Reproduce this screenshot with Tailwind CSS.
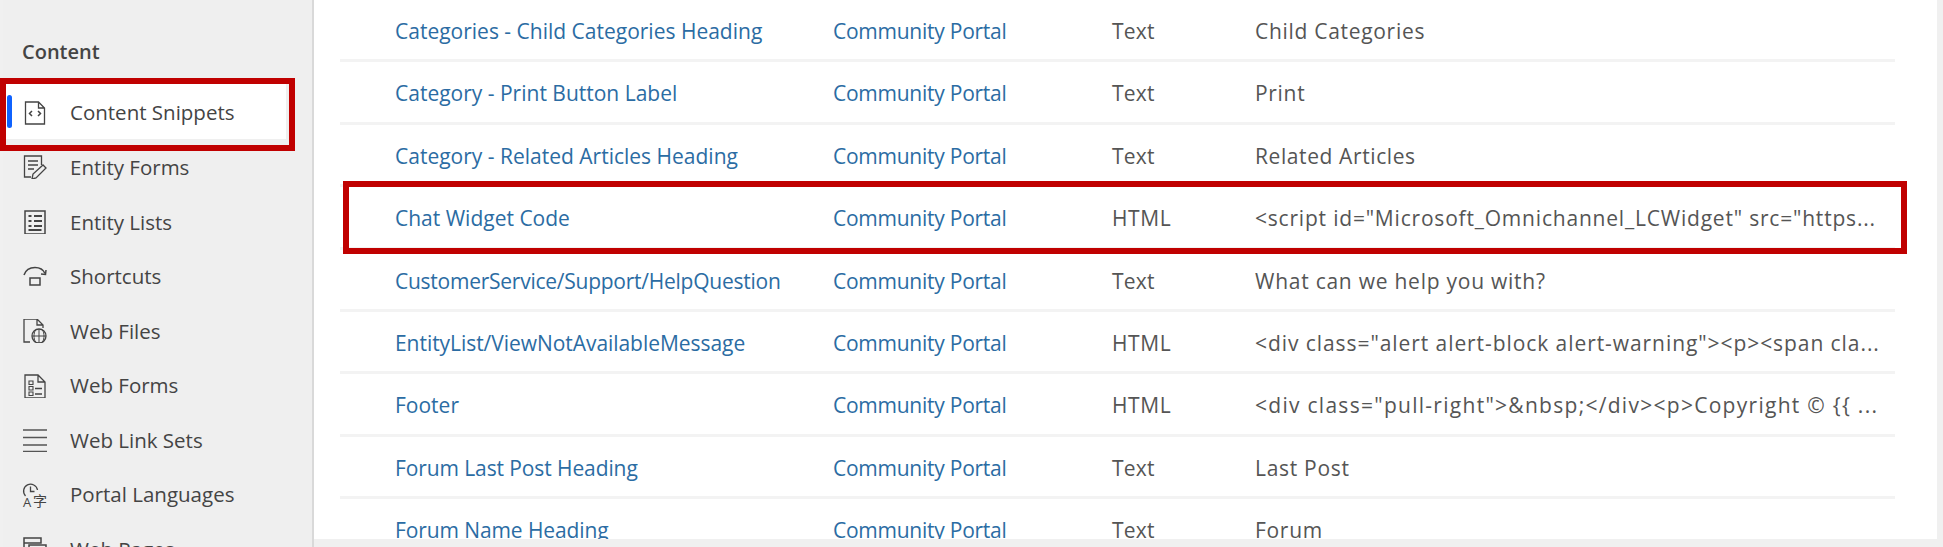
<!DOCTYPE html>
<html lang="en">
<head>
  <meta charset="UTF-8" />
  <title>Content Snippets</title>
  <script src="https://cdn.jsdelivr.net/npm/@tailwindcss/browser@4"></script>
</head>
<body class="bg-white font-['Open_Sans',sans-serif]">
<div class="relative flex h-[547px] w-[1943px] overflow-hidden bg-[#f0f0f0]">

  <!-- sidebar -->
  <aside class="ml-[3px] h-full w-[311px] shrink-0 overflow-hidden border-r-2 border-[#d9d9d9] bg-[#efefef] text-[20.5px] text-[#444]">
    <h2 class="h-[84px] pl-[19px] pt-[38px] text-[20px] leading-[28px] font-semibold text-[#444]">Content</h2>
    <ul class="w-[283px]">
      <li class="relative flex h-[55px] items-center gap-[23px] bg-white pt-[2px] pl-[20px]">
        <span class="absolute top-[11px] left-[4px] h-[33px] w-[5px] rounded-full bg-[#0f62fe]"></span>
        <svg class="h-6 w-6 shrink-0" viewBox="0 0 24 24" fill="none" stroke="#444" stroke-width="1.3"><path d="M2.5 1h13l6 6v16h-19zM15.5 1v6h6"/><path d="M9 10l-2.5 2.5L9 15M15 10l2.5 2.5L15 15" stroke-width="1.5"/></svg>
        <span>Content Snippets</span>
      </li>
      <li class="flex h-[54.6px] items-center gap-[23px] pt-[2px] pl-[20px]">
        <svg class="h-6 w-6 shrink-0" viewBox="0 0 24 24" fill="none" stroke="#444" stroke-width="1.3"><path d="M8 22H1.500V1h17v9"/><path d="M5 6h10M5 10h10M5 14h6"/><path d="M9 24l1-5 10-9 3 3-10 10z" fill="#efefef"/></svg>
        <span>Entity Forms</span>
      </li>
      <li class="flex h-[54.6px] items-center gap-[23px] pt-[2px] pl-[20px]">
        <svg class="h-6 w-6 shrink-0" viewBox="0 0 24 24" fill="none" stroke="#444" stroke-width="1.500"><path d="M2 1h20v23H2z"/><path d="M5.500 6h3M11 6h8M5.500 11h3M11 11h8M5.500 16h3M11 16h8M5.500 20h13" stroke-width="1.800"/></svg>
        <span>Entity Lists</span>
      </li>
      <li class="flex h-[54.6px] items-center gap-[23px] pt-[2px] pl-[20px]">
        <svg class="h-6 w-6 shrink-0" viewBox="0 0 24 24" fill="none" stroke="#444" stroke-width="1.500"><path d="M1 11C3 5 8 3.500 12 3.500c4 0 8 1.500 10 6"/><path d="M18 10l4.500.5.500-4.500"/><path d="M7 14h10v7H7z"/></svg>
        <span>Shortcuts</span>
      </li>
      <li class="flex h-[54.6px] items-center gap-[23px] pt-[2px] pl-[20px]">
        <svg class="h-6 w-6 shrink-0" viewBox="0 0 24 24" fill="none" stroke="#444" stroke-width="1.300"><path d="M7 23H1V0h13l6 6v3M14 0v6h6"/><circle cx="16" cy="17" r="7"/><path d="M9 17h14M16 10v14M12.500 11c-2 3.500-2 8.500 0 12M19.500 11c2 3.500 2 8.500 0 12" stroke-width="1"/></svg>
        <span>Web Files</span>
      </li>
      <li class="flex h-[54.6px] items-center gap-[23px] pt-[2px] pl-[20px]">
        <svg class="h-6 w-6 shrink-0" viewBox="0 0 24 24" fill="none" stroke="#444" stroke-width="1.300"><path d="M2 1h13l7 7v16H2zM15 1v7h7"/><path d="M6 7h4v3.500H6zM6 12.500h4V16H6zM6 18h4v3.500H6z" stroke-width="1.100"/><path d="M12 14.500h7M12 20h7"/></svg>
        <span>Web Forms</span>
      </li>
      <li class="flex h-[54.6px] items-center gap-[23px] pt-[2px] pl-[20px]">
        <svg class="h-6 w-6 shrink-0" viewBox="0 0 24 24" fill="none" stroke="#555" stroke-width="1.700"><path d="M0 2h24M0 9.500h24M0 17h24M0 23.500h24"/></svg>
        <span>Web Link Sets</span>
      </li>
      <li class="flex h-[54.6px] items-center gap-[23px] pt-[2px] pl-[20px]">
        <svg class="h-6 w-6 shrink-0 overflow-visible" viewBox="0 0 24 24" fill="none" stroke="#444" stroke-width="1.300"><path d="M2.500 13A7 7 0 1 1 14.500 7"/><path d="M7.500 3.500V8.500H11.500"/><text x="0" y="24" font-size="13" fill="#444" stroke="none" font-family="Open Sans, sans-serif">A</text><text x="10" y="22.500" font-size="14" fill="#444" stroke="none" font-family="Noto Sans CJK SC, sans-serif">字</text></svg>
        <span>Portal Languages</span>
      </li>
      <li class="flex h-[54.6px] items-center gap-[23px] pt-[2px] pl-[20px]">
        <svg class="h-6 w-6 shrink-0" viewBox="0 0 24 24" fill="none" stroke="#444" stroke-width="1.500"><path d="M1 1h17v5H1zM1 6v13h4M6 8h17v14H6zM6 12h17"/></svg>
        <span>Web Pages</span>
      </li>
    </ul>
  </aside>

  <!-- snippets table -->
  <main class="mr-[6px] mb-[8px] flex-1 overflow-hidden bg-white pl-[26px] text-[21px] text-[#555]">
    <div class="w-[1555px]">
      <div class="grid h-[62.4px] grid-cols-[438px_279px_143px_1fr] items-center border-b-[3px] border-[#f3f3f3] pt-[4px] pl-[55px] whitespace-nowrap"><a class="text-[#2b6ca3]">Categories - Child Categories Heading</a><a class="tracking-[-0.25px] text-[#2b6ca3]">Community Portal</a><span class="tracking-[0.2px]">Text</span><span class="tracking-[0.7px]">Child Categories</span></div>
      <div class="grid h-[62.4px] grid-cols-[438px_279px_143px_1fr] items-center border-b-[3px] border-[#f3f3f3] pt-[4px] pl-[55px] whitespace-nowrap"><a class="text-[#2b6ca3]">Category - Print Button Label</a><a class="tracking-[-0.25px] text-[#2b6ca3]">Community Portal</a><span class="tracking-[0.2px]">Text</span><span class="tracking-[0.7px]">Print</span></div>
      <div class="grid h-[62.4px] grid-cols-[438px_279px_143px_1fr] items-center border-b-[3px] border-[#f3f3f3] pt-[4px] pl-[55px] whitespace-nowrap"><a class="text-[#2b6ca3]">Category - Related Articles Heading</a><a class="tracking-[-0.25px] text-[#2b6ca3]">Community Portal</a><span class="tracking-[0.2px]">Text</span><span class="tracking-[0.6px]">Related Articles</span></div>
      <div class="grid h-[62.4px] grid-cols-[438px_279px_143px_1fr] items-center border-b-[3px] border-[#f3f3f3] pt-[4px] pl-[55px] whitespace-nowrap"><a class="text-[#2b6ca3]">Chat Widget Code</a><a class="tracking-[-0.25px] text-[#2b6ca3]">Community Portal</a><span class="tracking-[0.6px]">HTML</span><span class="tracking-[0.8px]">&lt;script id="Microsoft_Omnichannel_LCWidget" src="https...</span></div>
      <div class="grid h-[62.4px] grid-cols-[438px_279px_143px_1fr] items-center border-b-[3px] border-[#f3f3f3] pt-[4px] pl-[55px] whitespace-nowrap"><a class="tracking-[-0.25px] text-[#2b6ca3]">CustomerService/Support/HelpQuestion</a><a class="tracking-[-0.25px] text-[#2b6ca3]">Community Portal</a><span class="tracking-[0.2px]">Text</span><span class="tracking-[0.75px]">What can we help you with?</span></div>
      <div class="grid h-[62.4px] grid-cols-[438px_279px_143px_1fr] items-center border-b-[3px] border-[#f3f3f3] pt-[4px] pl-[55px] whitespace-nowrap"><a class="tracking-[-0.05px] text-[#2b6ca3]">EntityList/ViewNotAvailableMessage</a><a class="tracking-[-0.25px] text-[#2b6ca3]">Community Portal</a><span class="tracking-[0.6px]">HTML</span><span class="tracking-[0.93px]">&lt;div class="alert alert-block alert-warning"&gt;&lt;p&gt;&lt;span cla...</span></div>
      <div class="grid h-[62.4px] grid-cols-[438px_279px_143px_1fr] items-center border-b-[3px] border-[#f3f3f3] pt-[4px] pl-[55px] whitespace-nowrap"><a class="text-[#2b6ca3]">Footer</a><a class="tracking-[-0.25px] text-[#2b6ca3]">Community Portal</a><span class="tracking-[0.6px]">HTML</span><span class="tracking-[1.28px]">&lt;div class="pull-right"&gt;&amp;nbsp;&lt;/div&gt;&lt;p&gt;Copyright © {{ ...</span></div>
      <div class="grid h-[62.4px] grid-cols-[438px_279px_143px_1fr] items-center border-b-[3px] border-[#f3f3f3] pt-[4px] pl-[55px] whitespace-nowrap"><a class="tracking-[-0.1px] text-[#2b6ca3]">Forum Last Post Heading</a><a class="tracking-[-0.25px] text-[#2b6ca3]">Community Portal</a><span class="tracking-[0.2px]">Text</span><span class="tracking-[0.7px]">Last Post</span></div>
      <div class="grid h-[62.4px] grid-cols-[438px_279px_143px_1fr] items-center border-b-[3px] border-[#f3f3f3] pt-[4px] pl-[55px] whitespace-nowrap"><a class="tracking-[-0.1px] text-[#2b6ca3]">Forum Name Heading</a><a class="tracking-[-0.25px] text-[#2b6ca3]">Community Portal</a><span class="tracking-[0.2px]">Text</span><span class="tracking-[0.7px]">Forum</span></div>
    </div>
  </main>

  <!-- red callouts drawn over the page -->
  <div class="absolute top-[78px] left-0 h-[73px] w-[295px] border-[6px] border-[#c00000]"></div>
  <div class="absolute top-[181px] left-[343px] h-[73px] w-[1564px] border-[6px] border-[#c00000]"></div>
</div>
</body>
</html>
